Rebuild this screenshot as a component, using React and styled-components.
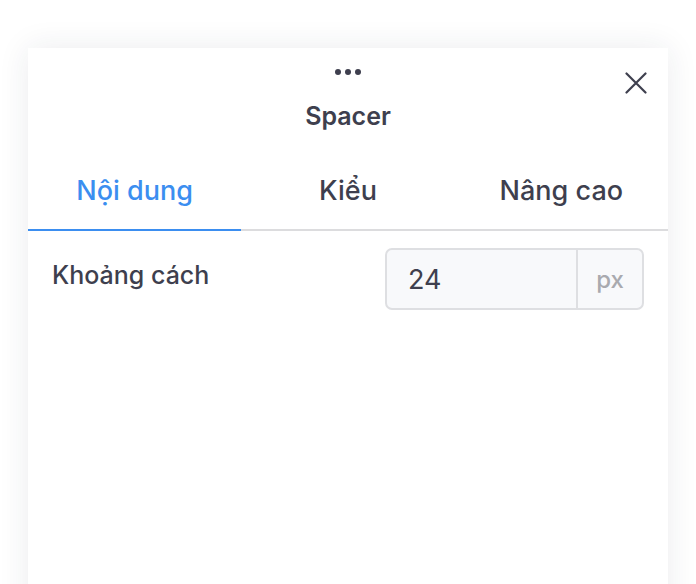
import React, { useState } from "react";
import styled, { createGlobalStyle } from "styled-components";

const GlobalStyle = createGlobalStyle`
  html, body {
    margin: 0;
    padding: 0;
    background: #ffffff;
    font-family: Inter, "Noto Sans", "Liberation Sans", sans-serif;
    -webkit-font-smoothing: antialiased;
  }
`;

const tabs = ["Nội dung", "Kiểu", "Nâng cao"];

const App = () => {
  const [active, setActive] = useState(0);
  return (
    <>
      <GlobalStyle />
      <Page>
        <Panel>
          <Header>
            <Dots>
              <span />
              <span />
              <span />
            </Dots>
            <Title>Spacer</Title>
            <CloseButton aria-label="Đóng">
              <svg width="22" height="22" viewBox="0 0 22 22" fill="none">
                <path
                  d="M1.5 1.5L20.5 20.5M20.5 1.5L1.5 20.5"
                  stroke="#3e3f4e"
                  strokeWidth="2.2"
                  strokeLinecap="round"
                />
              </svg>
            </CloseButton>
          </Header>

          <Tabs>
            {tabs.map((t, i) => (
              <Tab key={t} $active={i === active} onClick={() => setActive(i)}>
                {t}
              </Tab>
            ))}
          </Tabs>

          <Body>
            <Row>
              <Label>Khoảng cách</Label>
              <InputGroup>
                <NumberInput defaultValue="24" />
                <Unit>px</Unit>
              </InputGroup>
            </Row>
          </Body>
        </Panel>
      </Page>
    </>
  );
};

export default App;

const Page = styled.div`
  height: 584px;
  overflow: hidden;
  padding: 48px 28px 0;
  box-sizing: border-box;
`;

const Panel = styled.div`
  background: #ffffff;
  height: 600px;
  box-shadow: 0 0 30px rgba(30, 40, 70, 0.09);
  display: flex;
  flex-direction: column;
`;

const Header = styled.div`
  position: relative;
  display: flex;
  flex-direction: column;
  align-items: center;
  padding-top: 20px;
`;

const Dots = styled.div`
  display: flex;
  gap: 4px;
  height: 8px;
  align-items: center;

  span {
    width: 6px;
    height: 6px;
    border-radius: 50%;
    background: #3e3f4e;
  }
`;

const Title = styled.div`
  margin-top: 24px;
  font-size: 25px;
  font-weight: 600;
  color: #3e3f4e;
  line-height: 32px;
`;

const CloseButton = styled.button`
  position: absolute;
  top: 24px;
  right: 21px;
  width: 22px;
  height: 22px;
  padding: 0;
  border: 0;
  background: none;
  cursor: pointer;
`;

const Tabs = styled.div`
  display: grid;
  grid-template-columns: repeat(3, 1fr);
  margin-top: 30px;
  border-bottom: 2px solid #dcdcde;
`;

const Tab = styled.div`
  text-align: center;
  font-size: 27px;
  font-weight: 500;
  line-height: 36px;
  padding: 11px 0 20px;
  margin-bottom: -2px;
  color: ${(p) => (p.$active ? "#3b8ef0" : "#3e3f4e")};
  border-bottom: 2px solid ${(p) => (p.$active ? "#3b8ef0" : "transparent")};
  cursor: pointer;
`;

const Body = styled.div`
  padding: 17px 24px 0;
`;

const Row = styled.div`
  display: flex;
  justify-content: space-between;
  align-items: flex-start;
`;

const Label = styled.div`
  font-size: 25px;
  font-weight: 500;
  color: #3e3f4e;
  line-height: 32px;
  padding-top: 11px;
`;

const InputGroup = styled.div`
  display: flex;
  width: 259px;
  height: 62px;
  box-sizing: border-box;
  border: 2px solid #dedfe2;
  border-radius: 7px;
  background: #f8f9fb;
  overflow: hidden;
`;

const NumberInput = styled.input`
  flex: 1;
  min-width: 0;
  border: 0;
  background: transparent;
  padding: 0 0 0 21px;
  font-family: inherit;
  font-size: 27px;
  color: #3e3f4e;
  outline: none;
`;

const Unit = styled.div`
  width: 64px;
  border-left: 2px solid #dedfe2;
  display: flex;
  align-items: center;
  justify-content: center;
  font-size: 24px;
  font-weight: 500;
  color: #a9aaaf;
`;
